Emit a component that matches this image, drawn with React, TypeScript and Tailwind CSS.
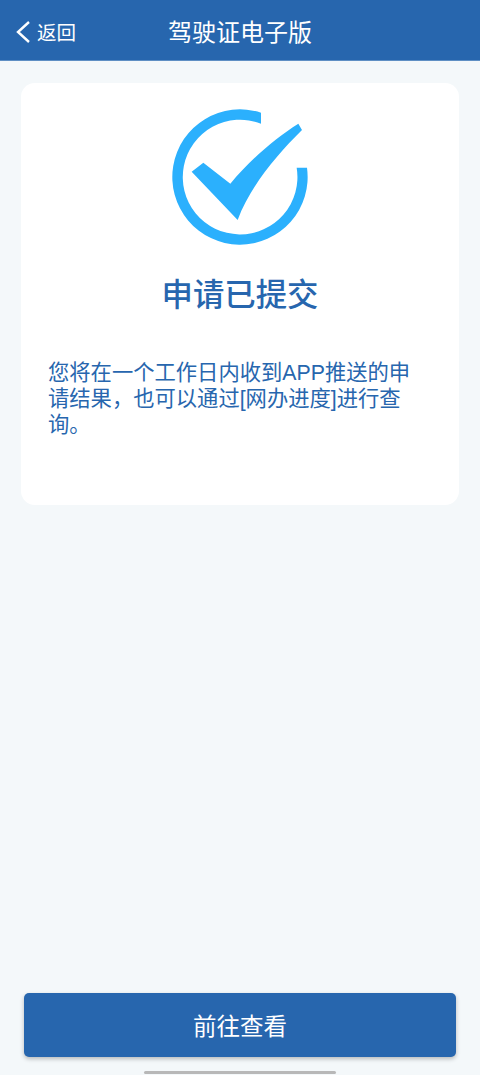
import React from 'react';

const fontStack = "font-['Liberation_Sans','Noto_Sans_CJK_SC',sans-serif]";

// Ring with a gap at the top right, plus the tick that runs through it
const SuccessIcon: React.FC = () => (
  <svg width="180" height="170" viewBox="0 0 540 510" fill="#2bb0fd" className="block">
    <path d="M333 68 A203 203 0 1 0 471 233 L440 233 A172 172 0 1 1 333 101 Z" />
    <path d="M125 245 L160 218 L241 281 C300 210 375 145 445 101 L456 120 C380 195 300 290 263 390 Z" />
  </svg>
);

const BackIcon: React.FC = () => (
  <svg width="16" height="26" viewBox="0 0 16 26" fill="none" stroke="white" strokeWidth="2.4" className="block">
    <path d="M14 2 L3 12 L14 22" />
  </svg>
);

export default function App() {
  return (
    <div className={`${fontStack} relative flex h-[1075px] w-[480px] flex-col overflow-hidden bg-[#f4f8fa]`}>
      {/* Header */}
      <header className="relative flex h-[61px] shrink-0 items-center justify-center border-b border-b-[#5f8fc4] bg-[#2766ae] pt-[5px] text-white">
        <div className="absolute left-[15px] top-[20px] flex items-start">
          <BackIcon />
          <span className="ml-[6px] text-[19.5px] leading-[26px]">返回</span>
        </div>
        <h1 className="text-[24px] font-normal leading-[32px]">驾驶证电子版</h1>
      </header>

      <main className="flex flex-1 flex-col px-[21px] pt-[22px]">
        {/* Result card */}
        <section className="flex h-[422px] w-[438px] flex-col rounded-[14px] bg-white pl-[27px] pr-[41px]">
          <div className="-mr-[14px] flex justify-center pt-[7px]">
            <SuccessIcon />
          </div>
          <h2 className="-mr-[14px] mt-[13px] text-center text-[31.4px] font-medium leading-[46px] text-[#2766ae]">申请已提交</h2>
          <p className="mt-[41px] text-[21.3px] leading-[26px] text-[#2766ae]">
            您将在一个工作日内收到APP推送的申请结果，也可以通过[网办进度]进行查询。
          </p>
        </section>

        {/* Footer action */}
        <div className="mt-auto px-[3px] pb-[18px]">
          <button className="flex h-[64px] w-[432px] items-center justify-center rounded-[5px] bg-[#2766ae] pt-[5px] text-[23.5px] text-white shadow-[0_2px_4px_rgba(0,0,0,0.25)]">
            前往查看
          </button>
        </div>
      </main>

      {/* Home indicator */}
      <div className="absolute bottom-[1px] left-[144px] h-[3px] w-[192px] rounded-full bg-[#b8b8b8]" />
    </div>
  );
}
